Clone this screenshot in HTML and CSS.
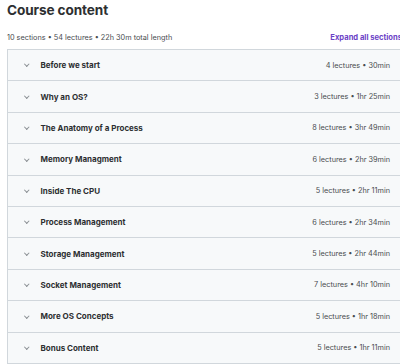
FILE: index.html
```html
<!DOCTYPE html>
<html lang="en">
<head>
    <meta charset="UTF-8">
    <title>Course content</title>
    <link rel="stylesheet" href="styles.css">
</head>
<body>
<div class="content">
    <h2 class="title">Course content</h2>
    <div class="meta">
        <span class="stats">10 sections • 54 lectures • 22h 30m total length</span>
        <span class="expand">Expand all sections</span>
    </div>
    <ul class="sections">
        <li><span class="chev"></span><span class="name">Before we start</span><span class="info">4 lectures • 30min</span></li>
        <li><span class="chev"></span><span class="name">Why an OS?</span><span class="info">3 lectures • 1hr 25min</span></li>
        <li><span class="chev"></span><span class="name">The Anatomy of a Process</span><span class="info">8 lectures • 3hr 49min</span></li>
        <li><span class="chev"></span><span class="name">Memory Managment</span><span class="info">6 lectures • 2hr 39min</span></li>
        <li><span class="chev"></span><span class="name">Inside The CPU</span><span class="info">5 lectures • 2hr 11min</span></li>
        <li><span class="chev"></span><span class="name">Process Management</span><span class="info">6 lectures • 2hr 34min</span></li>
        <li><span class="chev"></span><span class="name">Storage Management</span><span class="info">5 lectures • 2hr 44min</span></li>
        <li><span class="chev"></span><span class="name">Socket Management</span><span class="info">7 lectures • 4hr 10min</span></li>
        <li><span class="chev"></span><span class="name">More OS Concepts</span><span class="info">5 lectures • 1hr 18min</span></li>
        <li><span class="chev"></span><span class="name">Bonus Content</span><span class="info">5 lectures • 1hr 11min</span></li>
    </ul>
</div>
</body>
</html>
```

FILE: styles.css
```css
*{
    margin: 0;
    padding: 0;
}
ul{
    list-style: none;
}
body{
    font-family: Inter, "Noto Sans", sans-serif;
    color: #2d2f31;
    background-color: #ffffff;
    overflow: hidden;
}
.content{
    width: 395px;
    padding: 0 0 0 7px;
}
.title{
    font-size: 13.6px;
    font-weight: 700;
    line-height: 20px;
    letter-spacing: -0.1px;
    color: #2d2f31;
}
.meta{
    display: flex;
    justify-content: space-between;
    align-items: center;
    height: 14px;
    margin-top: 10px;
    margin-bottom: 5px;
}
.stats{
    font-size: 7.3px;
    color: #494c4f;
}
.expand{
    font-size: 7.6px;
    font-weight: 700;
    color: #6b3fc6;
}
.sections{
    border: 1px solid #d1d7dc;
    border-right: none;
}
.sections li{
    display: flex;
    align-items: center;
    height: 30.4px;
    background-color: #f7f9fa;
    border-bottom: 1px solid #d1d7dc;
    padding: 0 12px 0 17px;
}
.sections li:last-child{
    border-bottom: none;
}
/* 小箭头 */
.chev{
    width: 2.5px;
    height: 2.5px;
    border-right: 1px solid #8a8f93;
    border-bottom: 1px solid #8a8f93;
    transform: rotate(45deg);
    margin-top: -2px;
    margin-right: 12px;
}
.name{
    flex: 1;
    font-size: 8px;
    font-weight: 700;
    color: #2d2f31;
}
.info{
    font-size: 7.3px;
    color: #494c4f;
}
```
